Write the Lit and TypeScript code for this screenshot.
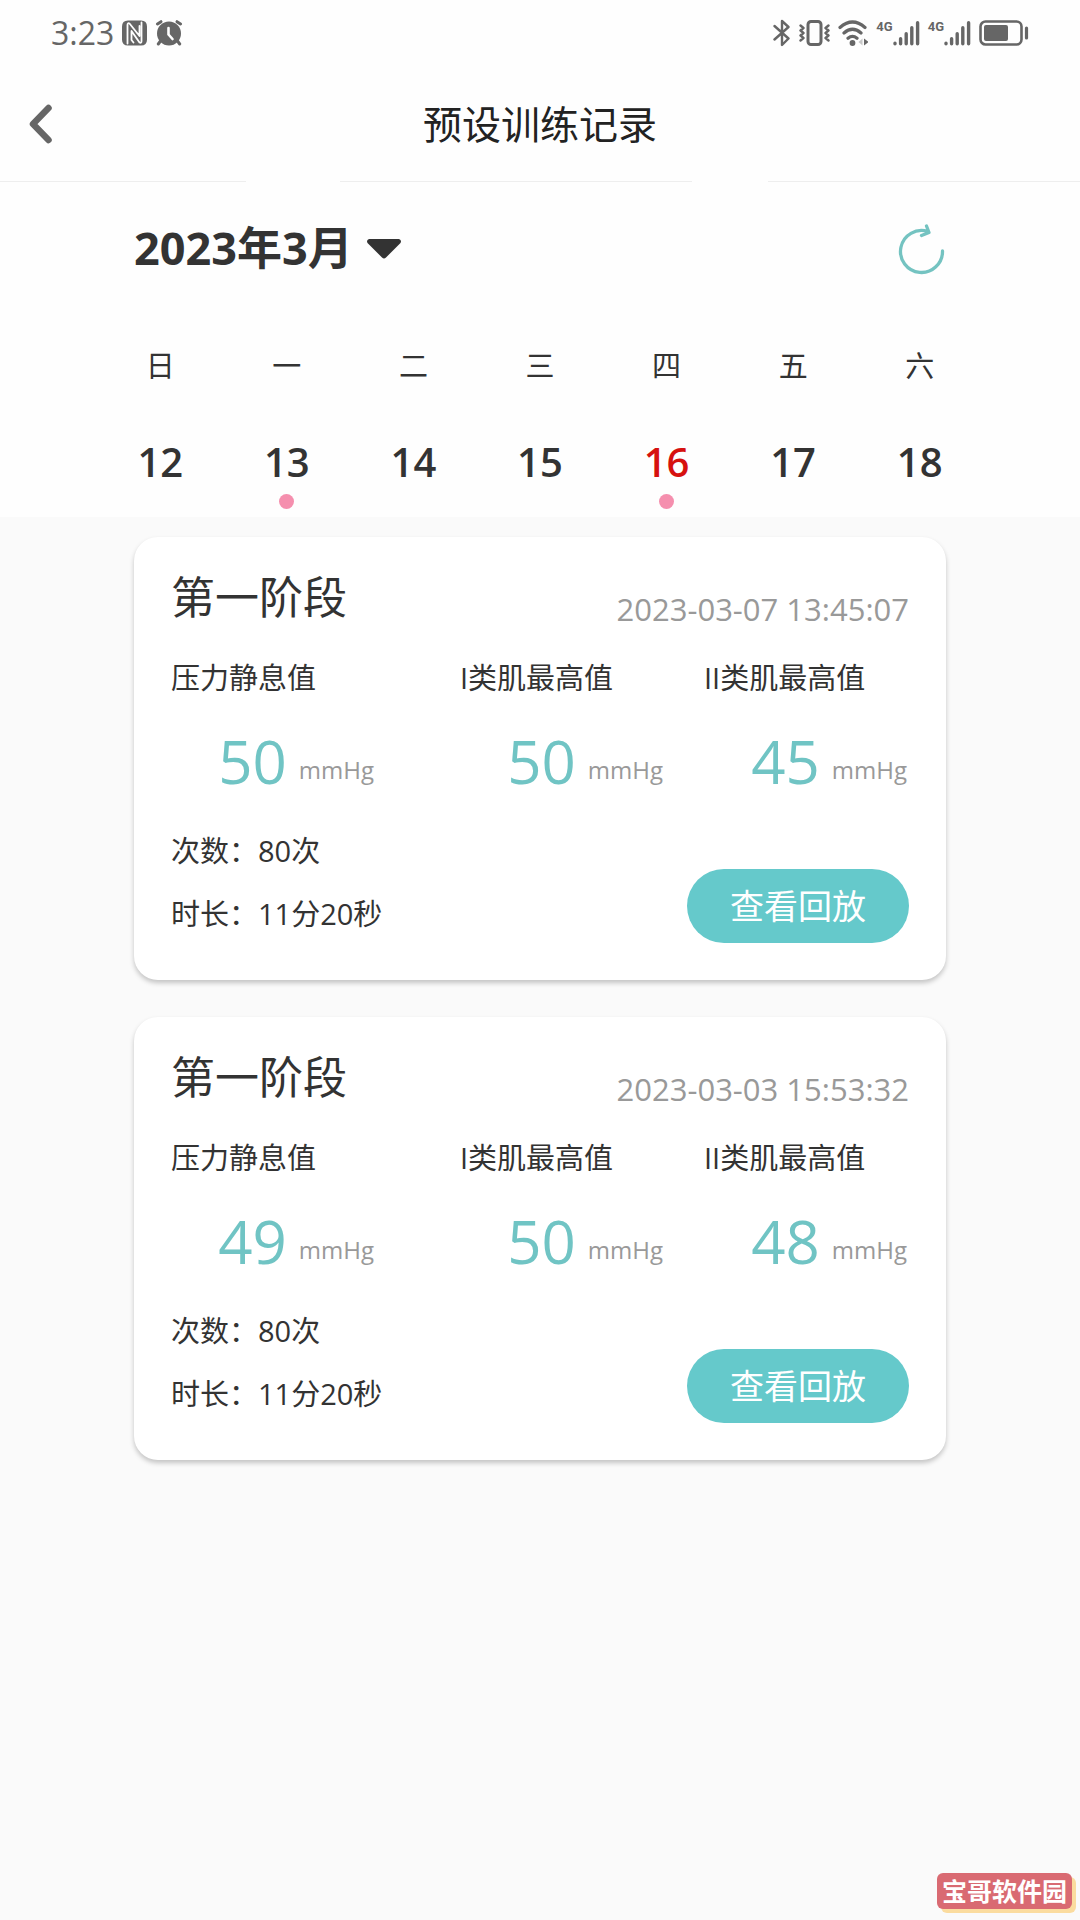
import { LitElement, html, css } from "lit";
import { customElement, property } from "lit/decorators.js";
import { classMap } from "lit/directives/class-map.js";

interface Metric {
  label: string;
  value: number;
}

interface TrainingRecord {
  stage: string;
  time: string;
  metrics: Metric[];
  count: string;
  duration: string;
}

interface Day {
  weekday: string;
  date: number;
  marked?: boolean;
  today?: boolean;
}

const DAYS: Day[] = [
  { weekday: "日", date: 12 },
  { weekday: "一", date: 13, marked: true },
  { weekday: "二", date: 14 },
  { weekday: "三", date: 15 },
  { weekday: "四", date: 16, marked: true, today: true },
  { weekday: "五", date: 17 },
  { weekday: "六", date: 18 },
];

const RECORDS: TrainingRecord[] = [
  {
    stage: "第一阶段",
    time: "2023-03-07 13:45:07",
    metrics: [
      { label: "压力静息值", value: 50 },
      { label: "I类肌最高值", value: 50 },
      { label: "II类肌最高值", value: 45 },
    ],
    count: "80次",
    duration: "11分20秒",
  },
  {
    stage: "第一阶段",
    time: "2023-03-03 15:53:32",
    metrics: [
      { label: "压力静息值", value: 49 },
      { label: "I类肌最高值", value: 50 },
      { label: "II类肌最高值", value: 48 },
    ],
    count: "80次",
    duration: "11分20秒",
  },
];

@customElement("status-bar")
export class StatusBar extends LitElement {
  static styles = css`
    :host {
      display: flex;
      align-items: center;
      justify-content: space-between;
      height: 66px;
      padding: 0 51px;
      color: #666;
    }
    .group {
      display: flex;
      align-items: center;
      gap: 8px;
    }
    .time {
      font-size: 32px;
      line-height: 40px;
    }
    .signal {
      display: flex;
      align-items: flex-start;
    }
    .net {
      font: 700 13px/14px Roboto, sans-serif;
    }
    svg {
      display: block;
      fill: none;
      stroke: currentColor;
      stroke-linecap: round;
      stroke-linejoin: round;
    }
    .solid {
      fill: currentColor;
      stroke: none;
    }
  `;

  private signal() {
    return html`<span class="signal">
      <span class="net">4G</span>
      <svg width="27" height="26" viewBox="0 0 27 26" stroke-width="3.4">
        <path d="M2 23.3v.4M7.6 18.7v5M13.2 13.7v10M18.8 7.7v16M24.6 2.7v21" />
      </svg>
    </span>`;
  }

  render() {
    return html`
      <div class="group">
        <span class="time">3:23</span>
        <svg width="25" height="26" viewBox="0 0 25 26">
          <path
            class="solid"
            d="M6 .5h13q6 0 6 6v13q0 6-6 6h-13q-6 0-6-6v-13q0-6 6-6z"
          />
          <path
            stroke="#fefefe"
            stroke-width="1.8"
            d="M5.5 23.500V5Q5.500 2.500 7.500 3.500L17.500 16V6M19.500 2.500V21Q19.500 23.500 17.500 22.500L9.500 11V20L11.500 22.500"
          />
        </svg>
        <svg width="28" height="26" viewBox="0 0 28 26">
          <circle class="solid" cx="14" cy="13.500" r="12" />
          <path stroke-width="3" d="M2.500 4L6 1.700M25.500 4L22 1.700M5.500 21L3.300 24M22.500 21L24.700 24" />
          <path stroke="#fefefe" stroke-width="2.600" d="M13.500 8v6.500l4 4.500" />
        </svg>
      </div>
      <div class="group">
        <svg width="18" height="28" viewBox="0 0 18 28" stroke-width="2.400">
          <path d="M1.500 7L15.500 19.500L9 26V2L15.500 8L1.500 20.500" />
        </svg>
        <svg width="31" height="26" viewBox="0 0 31 26">
          <rect x="9" y="1.500" width="13" height="23" rx="3" stroke-width="3" />
          <path
            stroke-width="2.400"
            d="M1.500 5.500l3 2.500-3 2.500 3 2.500-3 2.500 3 2.500-3 2.500M29.500 5.500l-3 2.500 3 2.500-3 2.500 3 2.500-3 2.500 3 2.500"
          />
        </svg>
        <svg width="30" height="26" viewBox="0 0 30 26">
          <path stroke-width="3.200" d="M2 7.500Q14.500-3.500 27 7.500M6 13Q14.500 5.500 23 13M10 18.300Q14.500 14.500 19 18.300" />
          <circle class="solid" cx="14.500" cy="23" r="2.900" />
          <path class="solid" d="M26 18.500v7l4.500-3.500z" />
          <path fill="#c8c8c8" stroke="none" d="M24.500 18.500v7L20.500 22z" />
        </svg>
        ${this.signal()} ${this.signal()}
        <svg width="50" height="26" viewBox="0 0 50 26">
          <rect x="1.500" y="1.500" width="41" height="23" rx="5" stroke-width="2.600" />
          <rect class="solid" x="5" y="5" width="24" height="16" rx="2" />
          <path stroke-width="3.200" d="M47.500 8v10" />
        </svg>
      </div>
    `;
  }
}

@customElement("week-calendar")
export class WeekCalendar extends LitElement {
  @property({ attribute: false }) days: Day[] = [];

  static styles = css`
    :host {
      display: block;
    }
    button {
      padding: 0;
      border: 0;
      background: none;
      color: inherit;
      font: inherit;
      cursor: pointer;
    }
    .bar {
      display: flex;
      align-items: center;
      justify-content: space-between;
      height: 132px;
      padding: 0 134px;
    }
    .month {
      display: flex;
      align-items: center;
      gap: 13px;
      font-size: 45px;
      font-weight: 700;
      line-height: 60px;
    }
    svg {
      display: block;
      overflow: visible;
    }
    .week {
      display: grid;
      grid-template-columns: repeat(7, 1fr);
      padding: 0 97px;
    }
    .day {
      display: flex;
      flex-direction: column;
      align-items: center;
      height: 203px;
    }
    .name {
      font-size: 29px;
      line-height: 104px;
    }
    .date {
      margin-top: 14px;
      font-size: 40px;
      font-weight: 600;
      line-height: 60px;
    }
    .today {
      color: #d6110f;
    }
    .dot {
      width: 15px;
      height: 15px;
      margin-top: 2px;
      border-radius: 50%;
      background: #f58fae;
    }
  `;

  render() {
    return html`
      <div class="bar">
        <button class="month">
          2023年3月
          <svg width="36" height="20" viewBox="0 0 36 20">
            <path
              fill="#333"
              d="M3 1H33Q36 2 34.500 5L20 19.500Q18 21.500 16 19.500L1.500 5Q0 2 3 1z"
            />
          </svg>
        </button>
        <button aria-label="刷新">
          <svg
            width="48"
            height="52"
            viewBox="0 0 48 52"
            fill="none"
            stroke="#74c3c1"
            stroke-width="3.300"
            stroke-linecap="round"
            stroke-linejoin="round"
          >
            <path d="M44.500 29A21 21 0 1 1 30 9.500M28.500 4L31 10.500L23.500 13.500" />
          </svg>
        </button>
      </div>
      <div class="week">
        ${this.days.map(
          (d) => html`<button class="day">
            <span class="name">${d.weekday}</span>
            <span class=${classMap({ date: true, today: !!d.today })}>${d.date}</span>
            ${d.marked ? html`<span class="dot"></span>` : null}
          </button>`
        )}
      </div>
    `;
  }
}

@customElement("record-card")
export class RecordCard extends LitElement {
  @property({ attribute: false }) record!: TrainingRecord;

  static styles = css`
    :host {
      display: block;
      padding: 28px 37px 37px;
      border-radius: 24px;
      background: #fff;
      box-shadow: 0 3px 5px rgba(0, 0, 0, 0.22);
    }
    .head {
      display: flex;
      align-items: flex-end;
      justify-content: space-between;
    }
    .stage {
      margin: 0;
      font-size: 44px;
      font-weight: 400;
      line-height: 64px;
    }
    .when {
      color: #999;
      font-size: 31px;
      line-height: 40px;
    }
    .metrics {
      display: grid;
      grid-template-columns: 289fr 244fr 205fr;
      margin: 29px 0 38px;
    }
    .metric {
      width: 203px;
    }
    .label {
      font-size: 29px;
      line-height: 40px;
      white-space: nowrap;
    }
    .reading {
      display: flex;
      align-items: flex-end;
      justify-content: flex-end;
      gap: 12px;
      margin: 31px 0 0;
    }
    .value {
      color: #70c4c4;
      font-size: 60px;
      line-height: 64px;
    }
    .unit {
      color: #999;
      font-size: 24px;
      line-height: 46px;
    }
    .foot {
      display: flex;
      align-items: flex-end;
      justify-content: space-between;
    }
    .facts {
      display: grid;
      gap: 23px;
      padding-bottom: 9px;
      font-size: 29px;
      line-height: 40px;
    }
    .replay {
      padding: 0 43px;
      border: 0;
      border-radius: 37px;
      background: #65c9cb;
      color: #fff;
      font: inherit;
      font-size: 34px;
      line-height: 74px;
      cursor: pointer;
    }
  `;

  render() {
    const r = this.record;
    return html`
      <div class="head">
        <h2 class="stage">${r.stage}</h2>
        <time class="when">${r.time}</time>
      </div>
      <div class="metrics">
        ${r.metrics.map(
          (m) => html`<div class="metric">
            <div class="label">${m.label}</div>
            <div class="reading">
              <span class="value">${m.value}</span><span class="unit">mmHg</span>
            </div>
          </div>`
        )}
      </div>
      <div class="foot">
        <div class="facts">
          <span>次数：${r.count}</span>
          <span>时长：${r.duration}</span>
        </div>
        <button class="replay">查看回放</button>
      </div>
    `;
  }
}

@customElement("app-root")
export class AppRoot extends LitElement {
  static styles = css`
    :host {
      display: block;
      position: relative;
      min-height: 100vh;
      background: #fafafa;
      color: #333;
      font-family: "Open Sans", "Noto Sans CJK SC", sans-serif;
    }
    .top {
      background: #fefefe;
    }
    .nav {
      display: grid;
      grid-template-columns: 1fr auto 1fr;
      align-items: center;
      height: 115px;
      padding: 0 28px;
    }
    .back {
      justify-self: start;
      padding: 0;
      border: 0;
      background: none;
      cursor: pointer;
    }
    .back svg {
      display: block;
    }
    .title {
      margin: 0;
      color: #222;
      font-size: 39px;
      font-weight: 400;
      line-height: 56px;
    }
    .rule {
      display: grid;
      grid-template-columns: 246fr 94fr 352fr 76fr 312fr;
      height: 1px;
    }
    .rule span:nth-child(odd) {
      background: #eee;
    }
    .list {
      display: grid;
      gap: 37px;
      padding: 20px 134px;
    }
    .brand {
      position: absolute;
      right: 8px;
      bottom: 11px;
      padding: 0 5px;
      border-radius: 6px;
      background: #d96a72;
      box-shadow: 4px 4px 0 #fbdc9f;
      color: #fff;
      font-size: 25px;
      font-weight: 700;
      line-height: 36px;
    }
  `;

  render() {
    return html`
      <div class="top">
        <status-bar></status-bar>
        <header class="nav">
          <button class="back" aria-label="返回">
            <svg width="26" height="40" viewBox="0 0 26 40">
              <path
                d="M20.500 4L5 20L20.500 36"
                fill="none"
                stroke="#666"
                stroke-width="6.500"
                stroke-linecap="round"
                stroke-linejoin="round"
              />
            </svg>
          </button>
          <h1 class="title">预设训练记录</h1>
        </header>
        <div class="rule">
          <span></span><span></span><span></span><span></span><span></span>
        </div>
        <week-calendar .days=${DAYS}></week-calendar>
      </div>
      <main class="list">
        ${RECORDS.map((r) => html`<record-card .record=${r}></record-card>`)}
      </main>
      <div class="brand">宝哥软件园</div>
    `;
  }
}
